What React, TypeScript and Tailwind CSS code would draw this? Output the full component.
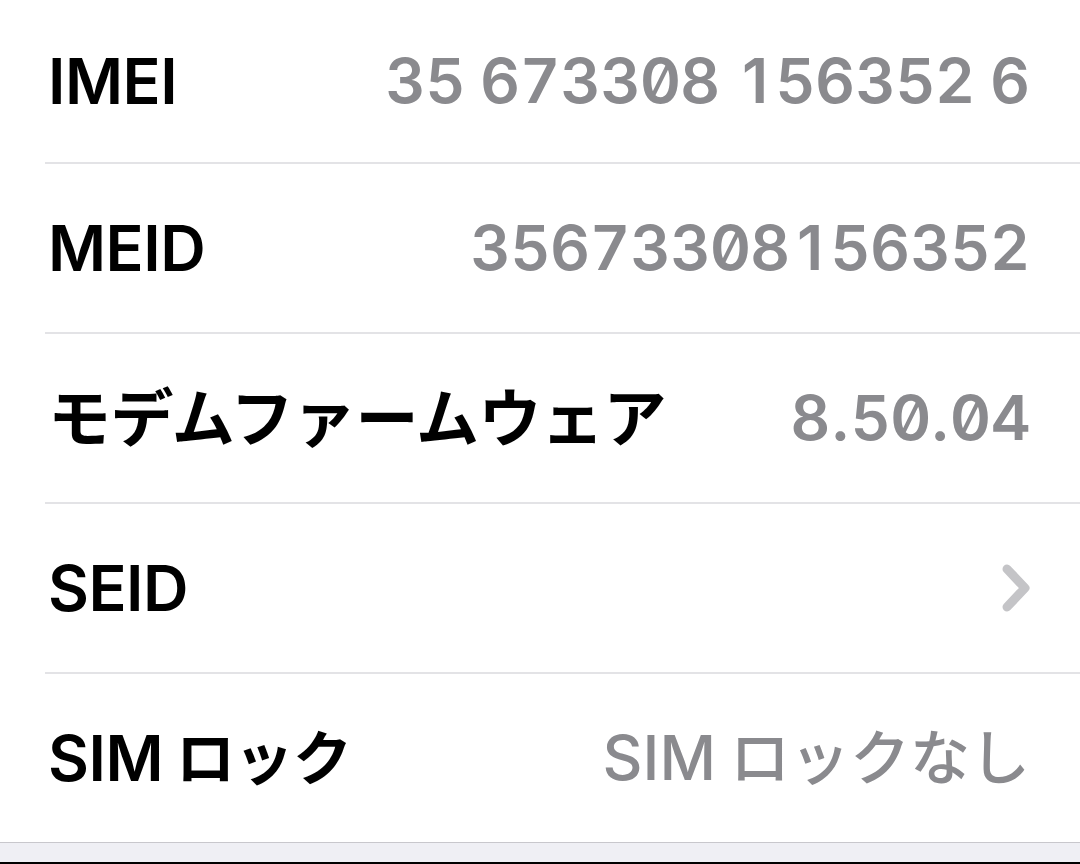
import React from "react";

const font = { fontFamily: "Inter, 'Noto Sans CJK JP', sans-serif" };

function Digits({ text }: { text: string }) {
  return (
    <span className="flex items-center slashed-zero font-semibold">
      {text.split("").map((c, i) =>
        c === " " ? (
          <span key={i} className="inline-block w-[15px]" />
        ) : c === "." ? (
          <span key={i} className="inline-block">
            .
          </span>
        ) : (
          <span key={i} className="inline-block w-[40px] text-center">
            {c}
          </span>
        )
      )}
    </span>
  );
}

function Row({
  label,
  value,
  chevron,
  first,
}: {
  label: React.ReactNode;
  value?: React.ReactNode;
  chevron?: boolean;
  first?: boolean;
}) {
  return (
    <div
      className={`flex items-center justify-between pl-[3px] pr-[50px] ${
        first ? "h-[162px]" : "h-[168px]"
      }`}
    >
      <div className="flex items-center text-[63px] font-semibold text-black leading-none tracking-[-0.5px]">
        {label}
      </div>
      {chevron ? (
        <svg width="30" height="50" viewBox="0 0 30 50" className="mr-[-1px]">
          <polyline
            points="6,6 24,25 6,44"
            fill="none"
            stroke="#c4c4c7"
            strokeWidth="9"
            strokeLinecap="round"
            strokeLinejoin="round"
          />
        </svg>
      ) : (
        <div className="flex items-center text-[62px] font-medium text-[#8a8a8e] leading-none">
          {value}
        </div>
      )}
    </div>
  );
}

function Sep() {
  return <div className="h-[2px] bg-[#e3e3e6]" />;
}

export default function App() {
  return (
    <div className="w-[1080px] h-[864px] bg-white overflow-hidden flex flex-col" style={font}>
      <div className="pl-[45px]">
        <Row first label="IMEI" value={<Digits text="35 673308 156352 6" />} />
        <Sep />
        <Row label="MEID" value={<Digits text="35673308156352" />} />
        <Sep />
        <Row
          label={<span className="font-bold">モデムファームウェア</span>}
          value={<Digits text="8.50.04" />}
        />
        <Sep />
        <Row label="SEID" chevron />
        <Sep />
        <Row
          label={
            <>
              <span>SIM</span>
              <span className="ml-[13px] text-[59px] font-bold">ロック</span>
            </>
          }
          value={
            <>
              <span>SIM</span>
              <span className="ml-[14px] text-[60px] font-medium">ロックなし</span>
            </>
          }
        />
      </div>
      <div className="h-px bg-[#c8c7cc]" />
      <div className="flex-1 bg-[#efeff4]" />
      <div className="h-[2px] bg-black" />
    </div>
  );
}
